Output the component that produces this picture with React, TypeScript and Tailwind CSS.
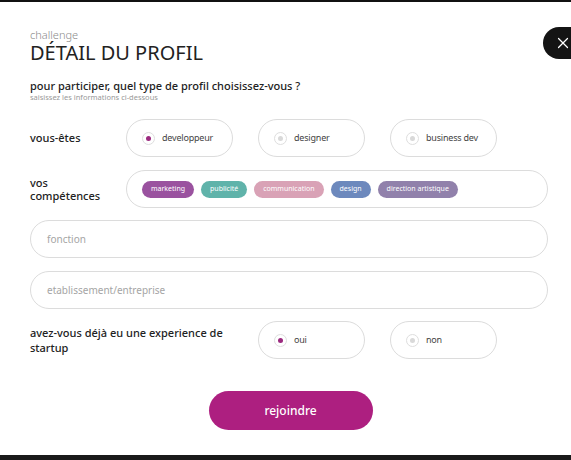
import { X } from 'lucide-react'

const font = { fontFamily: '"Noto Sans", "Liberation Sans", sans-serif' }

function Radio({ label, checked }: { label: string; checked?: boolean }) {
  return (
    <div className="w-[107px] h-[38px] rounded-full border border-[#dcdcdc] flex items-center pl-[15px] gap-[7px] bg-white">
      <span className="w-[13px] h-[13px] rounded-full border border-[#dedede] flex items-center justify-center">
        <span className={`w-[5px] h-[5px] rounded-full ${checked ? 'bg-[#9b2a7f]' : 'bg-[#d9d9d9]'}`} />
      </span>
      <span className="text-[9px] text-[#444] tracking-[-0.2px]">{label}</span>
    </div>
  )
}

const chips = [
  { label: 'marketing', color: 'bg-[#9a529f]' },
  { label: 'publicité', color: 'bg-[#60b3aa]' },
  { label: 'communication', color: 'bg-[#d9a2b6]' },
  { label: 'design', color: 'bg-[#6d89bd]' },
  { label: 'direction artistique', color: 'bg-[#9181ab]' }
]

export default function App() {
  return (
    <div style={font} className="relative w-[571px] h-[460px] bg-white overflow-hidden flex flex-col">
      <div className="h-[2px] bg-[#111]" />

      {/* bouton fermer */}
      <div className="absolute left-[543px] top-[27px] w-[40px] h-[32px] rounded-l-full bg-[#141414] flex items-center pl-[11px]">
        <X className="w-[18px] h-[18px] text-white" strokeWidth={1.6} />
      </div>

      <div className="flex-1 pl-[30px] pr-[23px] pt-[26px]">
        {/* titre */}
        <p className="text-[11px] leading-[13px] text-[#8a8a8a] font-light">challenge</p>
        <h1 className="mt-[1px] text-[20px] leading-[22px] text-[#222]">DÉTAIL DU PROFIL</h1>

        <p className="mt-[15px] text-[11px] leading-[14px] text-[#222] font-medium">
          pour participer, quel type de profil choisissez-vous ?
        </p>
        <p className="text-[7.5px] leading-[9px] text-[#999]">saisissez les informations ci-dessous</p>

        {/* vous-êtes */}
        <div className="mt-[17px] flex items-center">
          <div className="w-[96px] text-[11px] text-[#222] font-medium">vous-êtes</div>
          <div className="flex gap-[25px]">
            <Radio label="developpeur" checked />
            <Radio label="designer" />
            <Radio label="business dev" />
          </div>
        </div>

        {/* compétences */}
        <div className="mt-[13px] flex items-center">
          <div className="w-[96px] text-[11px] leading-[13px] text-[#222] font-medium">
            vos
            <br />
            compétences
          </div>
          <div className="flex-1 h-[38px] rounded-full border border-[#dcdcdc] flex items-center pl-[15px] gap-[7px]">
            {chips.map((c) => (
              <span
                key={c.label}
                className={`${c.color} h-[17px] px-[9px] rounded-full flex items-center text-[7px] text-white`}
              >
                {c.label}
              </span>
            ))}
          </div>
        </div>

        {/* champs */}
        <div className="mt-[12px] h-[38px] rounded-full border border-[#dcdcdc] flex items-center pl-[16px] text-[10px] text-[#a5a5a5]">
          fonction
        </div>
        <div className="mt-[13px] h-[38px] rounded-full border border-[#dcdcdc] flex items-center pl-[16px] text-[10px] text-[#a5a5a5]">
          etablissement/entreprise
        </div>

        {/* startup */}
        <div className="mt-[12px] flex items-center">
          <div className="w-[228px] text-[11px] leading-[15px] text-[#222] font-medium">
            avez-vous déjà eu une experience de startup
          </div>
          <div className="flex gap-[25px]">
            <Radio label="oui" checked />
            <Radio label="non" />
          </div>
        </div>

        <div className="mt-[32px] flex justify-center pl-[3px]">
          <button className="w-[164px] h-[39px] rounded-full bg-[#ad1f80] text-white text-[12px] font-medium">
            rejoindre
          </button>
        </div>
      </div>

      <div className="h-[5px] bg-[#1a1a1a]" />
    </div>
  )
}
